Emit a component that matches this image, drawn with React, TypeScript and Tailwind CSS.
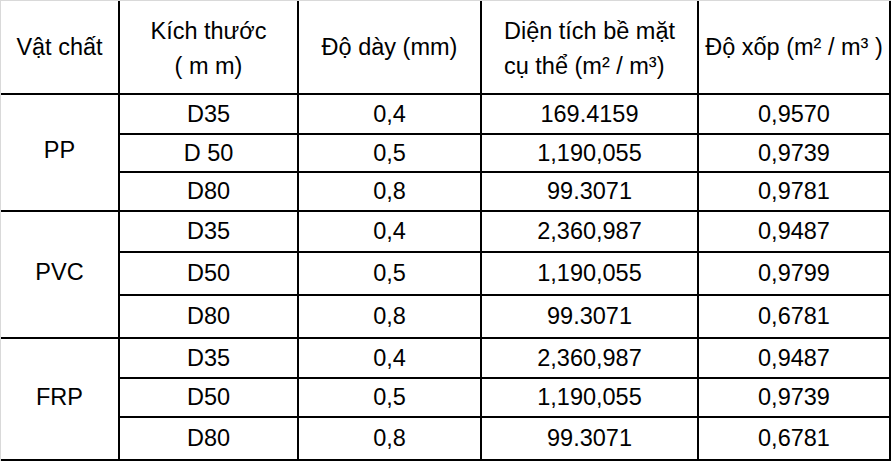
import React from "react";

const groups = [
  {
    name: "PP",
    rows: [
      ["D35", "0,4", "169.4159", "0,9570"],
      ["D 50", "0,5", "1,190,055", "0,9739"],
      ["D80", "0,8", "99.3071", "0,9781"],
    ],
  },
  {
    name: "PVC",
    rows: [
      ["D35", "0,4", "2,360,987", "0,9487"],
      ["D50", "0,5", "1,190,055", "0,9799"],
      ["D80", "0,8", "99.3071", "0,6781"],
    ],
  },
  {
    name: "FRP",
    rows: [
      ["D35", "0,4", "2,360,987", "0,9487"],
      ["D50", "0,5", "1,190,055", "0,9739"],
      ["D80", "0,8", "99.3071", "0,6781"],
    ],
  },
];

const cell =
  "border-r-2 border-b-2 border-black flex items-center justify-center text-center";

export default function App() {
  return (
    <div
      className="w-[891px] h-[461px] bg-white border-t border-l border-[#d9d9d9] text-black text-[23.5px] leading-[35px] overflow-hidden"
      style={{ fontFamily: '"Liberation Sans", Arial, sans-serif' }}
    >
      <div className="grid grid-cols-[119px_179px_183px_217px_192px] grid-rows-[94px_40px_38px_39px_41px_43px_43px_40px_39px_43px]">
        <div className={cell}>Vật chất</div>
        <div className={`${cell} pt-1`}>
          <span>
            Kích thước
            <br />( m m)
          </span>
        </div>
        <div className={cell}>Độ dày (mm)</div>
        <div className={`${cell} pt-1`}>
          <span className="text-left">
            Diện tích bề mặt
            <br />
            cụ thể (m² / m³)
          </span>
        </div>
        <div className={cell}>Độ xốp (m² / m³ )</div>
        {groups.map((g) => (
          <React.Fragment key={g.name}>
            <div className={`${cell} row-span-3 pb-1`}>{g.name}</div>
            {g.rows.map((r, i) => (
              <React.Fragment key={i}>
                {r.map((v, j) => (
                  <div key={j} className={cell}>
                    {v}
                  </div>
                ))}
              </React.Fragment>
            ))}
          </React.Fragment>
        ))}
      </div>
    </div>
  );
}
